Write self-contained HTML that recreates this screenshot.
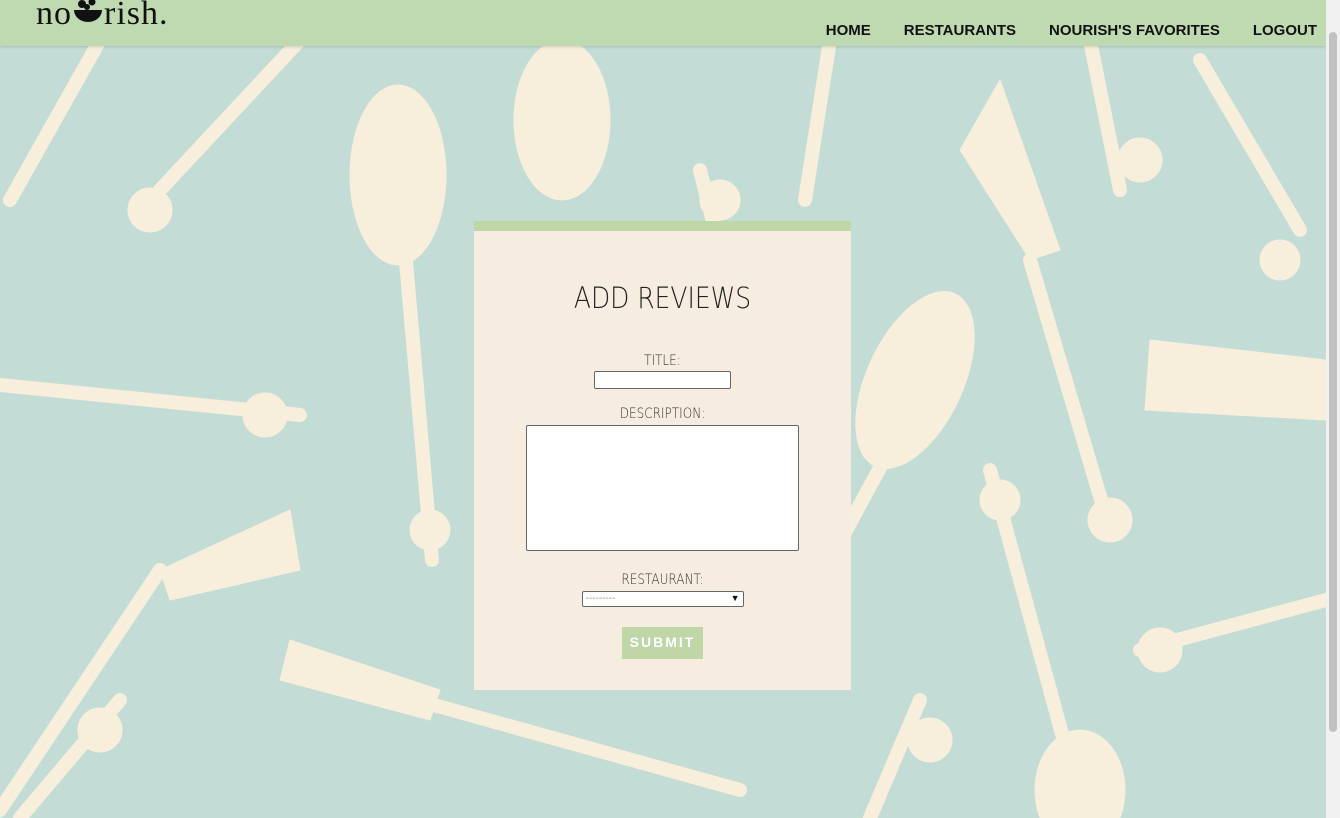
<!DOCTYPE html>
<html><head><meta charset="utf-8"><style>
*{box-sizing:border-box;margin:0;padding:0}
html,body{width:1340px;height:818px;overflow:hidden;background:#c3ddd6;font-family:"Liberation Sans",sans-serif}
#bg{position:absolute;left:0;top:0}
.nav{position:absolute;left:0;top:0;width:1326px;height:46px;background:#bfd9b0;box-shadow:0 1px 3px rgba(0,0,0,.15)}
.logo{position:absolute;left:36px;top:-5px;font-family:"Liberation Serif",serif;font-size:34px;color:#111;letter-spacing:1px}
.links{position:absolute;right:9px;top:22px;font-weight:bold;font-size:15px;color:#111}
.links span{margin-left:33px}
.sb{position:absolute;left:1326px;top:0;width:14px;height:818px;background:#f1f1f1}
.sb div{position:absolute;left:3px;top:32px;width:8px;height:700px;background:#c1c1c1;border-radius:4px}
.card{position:absolute;left:474px;top:221px;width:377px;height:469px;background:#f7ece0;border-top:10px solid #bfd6a7;text-align:center;color:#222}
h1{font-size:29px;margin-top:50px;font-family:"DejaVu Sans",sans-serif;font-weight:200;transform:scaleX(.86)}
label{display:block;font-size:14px;font-family:"DejaVu Sans",sans-serif;font-weight:200;color:#333;transform:scaleX(.86)}
.in{display:block;margin:0 auto;background:#fff;border:1px solid #666;border-radius:2px}
.btn{display:inline-block;background:#bfd6a7;color:#fff;font-weight:bold;font-size:14px;letter-spacing:2px;width:81px;height:32px;line-height:30px;margin-top:20px}
</style></head><body>
<svg id="bg" width="1326" height="818" viewBox="0 0 1326 818" fill="#f7eedc" stroke="#f7eedc" stroke-linecap="round">
<g stroke-width="14" fill="none">
<line x1="300" y1="40" x2="160" y2="190"/>
<line x1="100" y1="40" x2="10" y2="200"/>
<line x1="405" y1="250" x2="432" y2="560"/>
<line x1="830" y1="40" x2="805" y2="200"/>
<line x1="1030" y1="260" x2="1110" y2="530"/>
<line x1="895" y1="440" x2="830" y2="560"/>
<line x1="0" y1="385" x2="300" y2="415"/>
<line x1="0" y1="810" x2="160" y2="570"/>
<line x1="380" y1="690" x2="740" y2="790"/>
<line x1="990" y1="470" x2="1080" y2="800"/>
<line x1="1140" y1="650" x2="1326" y2="600"/>
<line x1="1200" y1="60" x2="1300" y2="230"/>
<line x1="1090" y1="40" x2="1120" y2="190"/>
<line x1="700" y1="170" x2="720" y2="250"/>
<line x1="920" y1="700" x2="870" y2="818"/>
<line x1="120" y1="700" x2="20" y2="818"/>
</g>
<ellipse cx="398" cy="175" rx="48" ry="90"/>
<ellipse cx="562" cy="120" rx="48" ry="80"/>
<ellipse cx="915" cy="380" rx="48" ry="95" transform="rotate(25 915 380)"/>
<ellipse cx="1080" cy="790" rx="45" ry="60"/>
<path d="M960 150 L1030 260 L1060 250 L1000 80 Z"/>
<path d="M160 570 L290 510 L300 570 L170 600 Z"/>
<path d="M290 640 L440 690 L430 720 L280 680 Z"/>
<path d="M1150 340 L1326 360 L1326 420 L1145 410 Z"/>
<g>
<circle cx="150" cy="210" r="22"/><circle cx="430" cy="530" r="20"/><circle cx="265" cy="415" r="22"/>
<circle cx="1110" cy="520" r="22"/><circle cx="1160" cy="650" r="22"/><circle cx="720" cy="200" r="20"/>
<circle cx="1280" cy="260" r="20"/><circle cx="1000" cy="500" r="20"/><circle cx="930" cy="740" r="22"/>
<circle cx="100" cy="730" r="22"/><circle cx="1140" cy="160" r="22"/>
</g>
</svg>
<div class="nav">
<div class="logo">no<svg width="32" height="28" viewBox="0 0 32 28" style="vertical-align:-2px"><path d="M2 12 H30 A14 12 0 0 1 2 12Z" fill="#111"/><circle cx="10" cy="6" r="4" fill="#111"/><circle cx="20" cy="4" r="3.5" fill="#111"/><circle cx="15" cy="9" r="3" fill="#111"/></svg>rish.</div>
<div class="links"><span>HOME</span><span>RESTAURANTS</span><span>NOURISH'S FAVORITES</span><span>LOGOUT</span></div>
</div>
<div class="sb"><div></div></div>
<div class="card">
<h1>ADD REVIEWS</h1>
<label style="margin-top:38px">TITLE:</label>
<div class="in" style="width:137px;height:18px;margin-top:2px"></div>
<label style="margin-top:17px">DESCRIPTION:</label>
<div class="in" style="width:273px;height:126px;margin-top:3px"></div>
<label style="margin-top:21px">RESTAURANT:</label>
<div class="in" style="width:162px;height:16px;margin-top:3px;text-align:left;font-size:10px;color:#999;line-height:13px;padding-left:3px;position:relative">---------<span style="position:absolute;right:3px;top:0;color:#111;font-size:9px">&#9660;</span></div>
<div class="btn">SUBMIT</div>
</div>
</body></html>
